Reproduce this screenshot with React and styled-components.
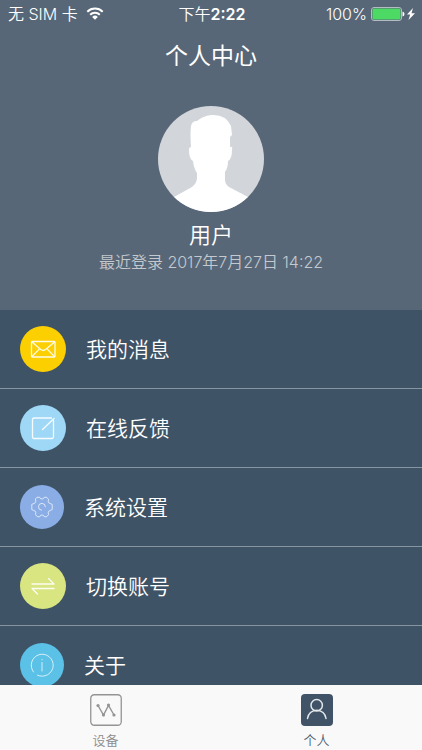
import React from 'react';
import styled, { createGlobalStyle } from 'styled-components';

const GlobalStyle = createGlobalStyle`
  * {
    box-sizing: border-box;
  }

  body {
    margin: 0;
    background: #3f5366;
    color: #fff;
    font-family: Inter, 'Noto Sans CJK SC', sans-serif;
    font-weight: 350;
  }
`;

const Screen = styled.div`
  display: flex;
  flex-direction: column;
  height: 100vh;
  overflow: hidden;
`;

const Header = styled.header`
  flex-shrink: 0;
  padding-bottom: 36px;
  background: #586777;
  text-align: center;
`;

const StatusBar = styled.div`
  display: grid;
  grid-template-columns: 1fr auto 1fr;
  align-items: center;
  height: 28px;
  padding: 0 6px 0 8px;
  font-size: 16px;
  line-height: 28px;
`;

const StatusGroup = styled.div`
  display: flex;
  align-items: center;
  justify-content: ${props => (props.$end ? 'flex-end' : 'flex-start')};
  gap: ${props => (props.$end ? '4px' : '8px')};
`;

const Clock = styled.span`
  font-weight: 600;
`;

const Title = styled.h1`
  margin: 8px 0 30px;
  font-size: 23px;
  font-weight: 400;
  line-height: 40px;
`;

const Avatar = styled.svg`
  display: block;
  width: 106px;
  height: 106px;
  margin: 0 auto;
`;

const UserName = styled.h2`
  margin: 8px 0 0;
  font-size: 22px;
  font-weight: 350;
  line-height: 30px;
`;

const LastLogin = styled.p`
  margin: 0;
  color: #c3c9cf;
  font-size: 16px;
  line-height: 24px;
`;

const Menu = styled.ul`
  flex: 1;
  min-height: 0;
  margin: 0;
  padding: 0;
  overflow: hidden;
  list-style: none;
`;

const MenuLink = styled.a`
  display: flex;
  align-items: center;
  gap: 20px;
  height: 79px;
  padding: 0 20px;
  border-bottom: 1px solid #8794a1;
  color: #fff;
  font-size: 21px;
  text-decoration: none;
`;

const MenuLabel = styled.span`
  padding-bottom: 3px;
`;

const Badge = styled.span`
  display: flex;
  align-items: center;
  justify-content: center;
  width: ${props => (props.$small ? '44px' : '46px')};
  height: ${props => (props.$small ? '44px' : '46px')};
  border-radius: 50%;
  background: ${props => props.$color};
`;

const LineIcon = styled.svg`
  width: 26px;
  height: 26px;
  fill: none;
  stroke: #fff;
  stroke-width: ${props => (props.$thin ? 1 : 1.3)};
  stroke-opacity: ${props => (props.$thin ? 0.75 : 0.9)};
  stroke-linecap: round;
  stroke-linejoin: round;
`;

const TabBar = styled.nav`
  display: flex;
  flex-shrink: 0;
  height: 65px;
  background: #f9f9fa;
`;

const Tab = styled.a`
  display: flex;
  flex: 1;
  flex-direction: column;
  align-items: center;
  gap: 4px;
  padding-top: 9px;
  color: ${props => (props.$active ? '#4f5c6a' : '#8c8c8c')};
  font-size: 13px;
  line-height: 20px;
  text-decoration: none;
`;

const Wifi = () => (
  <svg width="18" height="14" viewBox="0 0 18 14" aria-hidden="true">
    <g fill="none" stroke="#fff" strokeWidth="2">
      <path d="M1.3 4.7a11 11 0 0 1 15.4 0" />
      <path d="M4.2 7.7a6.8 6.8 0 0 1 9.6 0" />
    </g>
    <path d="M9 12.8 6.2 9.9a4 4 0 0 1 5.6 0z" fill="#fff" />
  </svg>
);

const Battery = () => (
  <svg width="45" height="14" viewBox="0 0 45 14" aria-hidden="true">
    <rect x="0.5" y="0.5" width="30" height="13" rx="2.5" fill="none" stroke="#b4bcc3" />
    <rect x="1.5" y="1.5" width="28" height="11" rx="1.5" fill="#4cd964" />
    <path d="M31.5 4.5q2 .5 2 2.5t-2 2.5z" fill="#fff" />
    <path d="M42 1 36 7.6h3.2L37.5 13 44 6.2h-3.5z" fill="#fff" />
  </svg>
);

const MailIcon = () => (
  <LineIcon viewBox="0 0 26 26" aria-hidden="true">
    <rect x="1.5" y="5.5" width="23.5" height="15.5" rx="1" />
    <path d="M2 6l8.8 7.6q2.4 1.8 4.8 0L24.5 6M2 20.5l7.5-7.6M24.5 20.5l-7.5-7.6" />
  </LineIcon>
);

const FeedbackIcon = () => (
  <LineIcon viewBox="0 0 26 26" aria-hidden="true">
    <path d="M23.5 5.5V22q0 1.5-1.5 1.5H4Q2.5 23.5 2.5 22V4.5Q2.5 3 4 3H21.5" />
    <path d="M12.5 14.5 24 3.5" />
  </LineIcon>
);

const GearIcon = () => (
  <LineIcon $thin viewBox="-1 -1 28 28" aria-hidden="true">
    <path d="M8 2.5h2.5l1 1.5q1.500.8 3 0l1-1.500H18l2 2.300-.3 2.500q.5 1.600 2 1.900l2.300 1v5.600l-2.300 1q-1.500.3-2 1.900l.3 2.500-2 2.300h-2.500l-1-1.500q-1.500-.8-3 0l-1 1.500H8l-2-2.300.3-2.500q-.5-1.600-2-1.900l-2.300-1v-5.600l2.300-1q1.500-.3 2-1.900L6 4.800z" />
    <path d="M12.500 16.500a3.700 3.700 0 1 1 4.100-3.700" />
  </LineIcon>
);

const SwitchIcon = () => (
  <LineIcon viewBox="0 0 26 26" aria-hidden="true">
    <path d="M2 11h22L18.500 5.500M24 15.500H2l5.500 5.500" />
  </LineIcon>
);

const InfoIcon = () => (
  <LineIcon $thin viewBox="0 0 26 26" aria-hidden="true">
    <path d="M8.500 23.200A11 11 0 1 0 4.500 20" />
    <path d="M13 10.500v8.500M13 7.500v.3" />
  </LineIcon>
);

const DeviceIcon = () => (
  <svg width="32" height="32" viewBox="0 0 32 32" aria-hidden="true">
    <rect x="0.75" y="0.75" width="30.5" height="30.5" rx="3.5" fill="none" stroke="#949494" strokeWidth="1.3" />
    <path d="M8 11.5 13.5 21 18.500 11.500 24 21" fill="none" stroke="#949494" strokeWidth="1.4" />
    <g fill="#949494">
      <circle cx="8" cy="11.5" r="1.6" />
      <circle cx="13.5" cy="21" r="1.6" />
      <circle cx="18.5" cy="11" r="1.6" />
      <circle cx="24" cy="21" r="1.6" />
    </g>
  </svg>
);

const PersonIcon = () => (
  <svg width="32" height="32" viewBox="0 0 32 32" aria-hidden="true">
    <rect width="32" height="32" rx="4" fill="#415467" />
    <g fill="none" stroke="#e4e8eb" strokeWidth="1.5" strokeLinecap="round">
      <circle cx="15.7" cy="11.3" r="5.7" />
      <path d="M6.5 24.5a9.3 9.3 0 0 1 18.5 0" />
    </g>
  </svg>
);

const items = [
  { label: '我的消息', color: '#fccf00', Icon: MailIcon },
  { label: '在线反馈', color: '#9fd8f6', Icon: FeedbackIcon },
  { label: '系统设置', color: '#8aade5', Icon: GearIcon, small: true },
  { label: '切换账号', color: '#d9e580', Icon: SwitchIcon },
  { label: '关于', color: '#5bc1e6', Icon: InfoIcon, small: true },
];

const App = () => (
  <Screen>
    <GlobalStyle />
    <Header>
      <StatusBar>
        <StatusGroup>
          无 SIM 卡
          <Wifi />
        </StatusGroup>
        <time>
          下午<Clock>2:22</Clock>
        </time>
        <StatusGroup $end>
          100%
          <Battery />
        </StatusGroup>
      </StatusBar>
      <Title>个人中心</Title>
      <Avatar viewBox="0 0 106 106" aria-hidden="true">
        <defs>
          <clipPath id="avatar">
            <circle cx="53" cy="53" r="53" />
          </clipPath>
        </defs>
        <g clipPath="url(#avatar)">
          <rect width="106" height="106" fill="#d2d6db" />
          <path
            d="M16 91 34 81Q39 77 39 72V67Q36 63 35 55Q31 53 31 44Q31 41 33 41Q32 28 33 20Q34 15 39 15Q45 10 53 9Q68 8 73 20L74 29 72 31V41Q75 40 74 44Q74 53 70 55Q70 62 67 66V74Q67 78 71 81L90 91V106H16z"
            fill="#fff"
          />
        </g>
      </Avatar>
      <UserName>用户</UserName>
      <LastLogin>最近登录 2017年7月27日 14:22</LastLogin>
    </Header>
    <Menu>
      {items.map(({ label, color, Icon, small }) => (
        <li key={label}>
          <MenuLink href="#">
            <Badge $color={color} $small={small}>
              <Icon />
            </Badge>
            <MenuLabel>{label}</MenuLabel>
          </MenuLink>
        </li>
      ))}
    </Menu>
    <TabBar>
      <Tab href="#">
        <DeviceIcon />
        设备
      </Tab>
      <Tab href="#" $active>
        <PersonIcon />
        个人
      </Tab>
    </TabBar>
  </Screen>
);

export default App;
